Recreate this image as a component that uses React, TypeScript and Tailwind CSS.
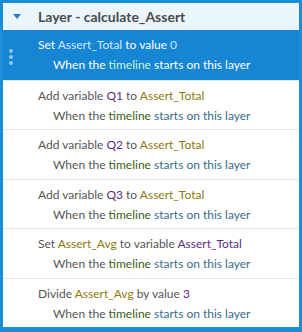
import React from "react";

const C = {
  text: "text-[#555555]",
  vari: "text-[#5b2c83]",
  gold: "text-[#8a7a0c]",
  green: "text-[#3b5e16]",
  blue: "text-[#3a6b8c]",
};

function Trigger() {
  return (
    <div className="pl-[50px] h-[20px] leading-[20px] whitespace-nowrap">
      <span className={C.text}>When the </span>
      <span className={C.green}>timeline</span>
      <span className={C.blue}> starts on this layer</span>
    </div>
  );
}

function Row({ children }: { children: React.ReactNode }) {
  return (
    <div className="h-[50px] border-t border-[#e6e6e6] pt-[5px] bg-white">
      <div className="pl-[35px] h-[20px] leading-[20px] whitespace-nowrap text-[#555555]">{children}</div>
      <Trigger />
    </div>
  );
}

export default function App() {
  return (
    <div
      className="w-[302px] h-[332px] bg-[#1b8dd6] pt-[3px] px-[3px] pb-[5px] text-[12px]"
      style={{ fontFamily: "Lato, 'Open Sans', sans-serif" }}
    >
      <div className="h-[324px] bg-white overflow-hidden flex flex-col">
        <div className="h-[27px] bg-[#eaf5fc] flex items-center shrink-0">
          <svg width="8" height="6" viewBox="0 0 8 6" className="ml-[10px] mr-[17px]">
            <path d="M0 0 L8 0 L4 5 Z" fill="#2b7fc4" />
          </svg>
          <span className="font-bold text-[14px] text-[#4a4a4a]">Layer - calculate_Assert</span>
        </div>
        <div className="h-[50px] bg-[#1685d3] pt-[5px] relative shrink-0">
          <div className="absolute left-[6px] top-[19px] flex flex-col gap-[2px]">
            <div className="w-[4px] h-[4px] rounded-full bg-[#8ec6ee]" />
            <div className="w-[4px] h-[4px] rounded-full bg-[#8ec6ee]" />
            <div className="w-[4px] h-[4px] rounded-full bg-[#8ec6ee]" />
          </div>
          <div className="pl-[35px] h-[20px] leading-[20px] whitespace-nowrap text-white">
            Set <span className="text-[#cfe9ff]">Assert_Total</span> to value <span className="text-[#cfe9ff]">0</span>
          </div>
          <div className="pl-[50px] h-[20px] leading-[20px] whitespace-nowrap text-white">
            When the <span className="text-[#c9f3d6]">timeline</span> starts on this layer
          </div>
        </div>
        <Row>
          Add variable <span className={C.vari}>Q1</span> to <span className={C.gold}>Assert_Total</span>
        </Row>
        <Row>
          Add variable <span className={C.vari}>Q2</span> to <span className={C.gold}>Assert_Total</span>
        </Row>
        <Row>
          Add variable <span className={C.vari}>Q3</span> to <span className={C.gold}>Assert_Total</span>
        </Row>
        <Row>
          Set <span className={C.gold}>Assert_Avg</span> to variable <span className={C.vari}>Assert_Total</span>
        </Row>
        <Row>
          Divide <span className={C.gold}>Assert_Avg</span> by value <span className={C.vari}>3</span>
        </Row>
      </div>
    </div>
  );
}
